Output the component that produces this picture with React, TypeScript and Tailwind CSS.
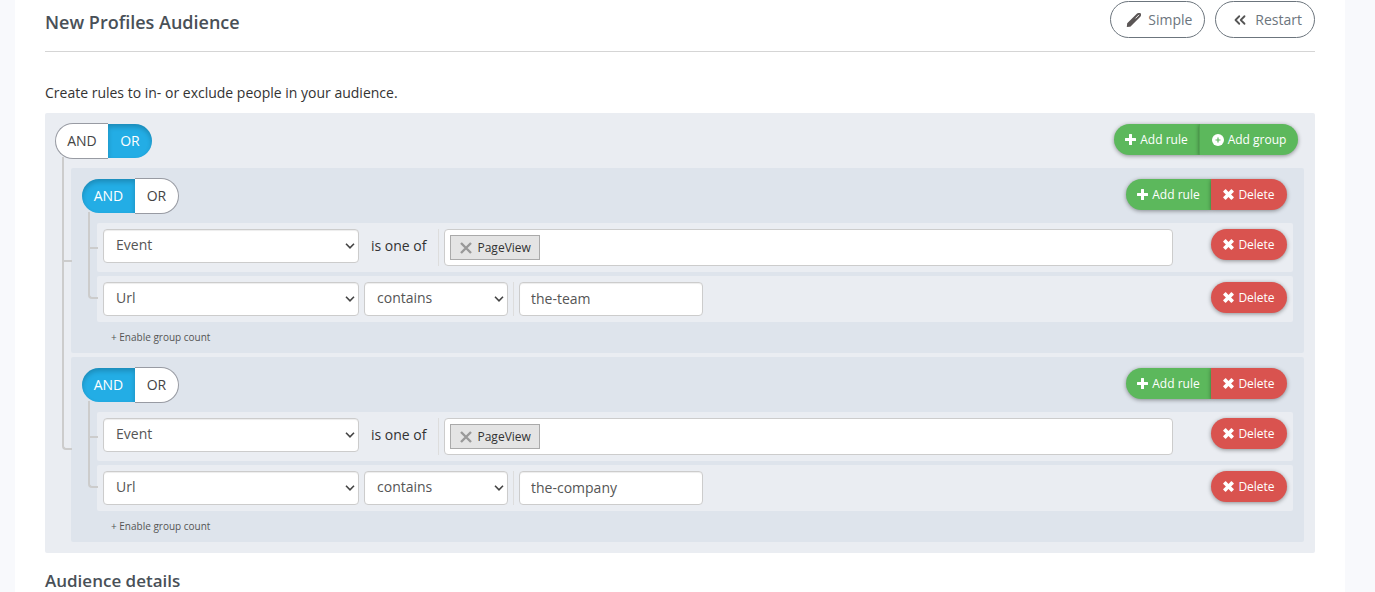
import type { ComponentProps, ReactNode } from "react";
import { ChevronsLeft } from "lucide-react";
import { clsx } from "clsx";

type Condition = "AND" | "OR";

type Rule = {
  field: string;
  operator: string;
  value: string;
  kind: "tags" | "text";
};

type Group = {
  id: string;
  condition: Condition;
  rules: Rule[];
};

const groups: Group[] = [
  {
    id: "group-1",
    condition: "AND",
    rules: [
      { field: "Event", operator: "is one of", value: "PageView", kind: "tags" },
      { field: "Url", operator: "contains", value: "the-team", kind: "text" },
    ],
  },
  {
    id: "group-2",
    condition: "AND",
    rules: [
      { field: "Event", operator: "is one of", value: "PageView", kind: "tags" },
      { field: "Url", operator: "contains", value: "the-company", kind: "text" },
    ],
  },
];

const PlusIcon = () => (
  <svg viewBox="0 0 11 11" className="size-[11px]" fill="currentColor" aria-hidden="true">
    <path d="M4 0.5Q4 0 4.5 0H6.5Q7 0 7 0.5V4H10.5Q11 4 11 4.5V6.5Q11 7 10.5 7H7V10.5Q7 11 6.5 11H4.5Q4 11 4 10.5V7H0.5Q0 7 0 6.5V4.5Q0 4 0.5 4H4Z" />
  </svg>
);

const PlusSignIcon = () => (
  <svg viewBox="0 0 12 12" className="size-3" aria-hidden="true">
    <circle cx="6" cy="6" r="6" fill="currentColor" />
    <path d="M6 3.5V8.5M3.5 6H8.5" stroke="#5cb85c" strokeWidth="1.2" />
  </svg>
);

const RemoveIcon = () => (
  <svg viewBox="0 0 11 11" className="size-[11px]" fill="currentColor" aria-hidden="true">
    <path d="M0.3 2.3L2.3 0.3Q2.6 0 2.9 0.3L5.5 2.9L8.1 0.3Q8.4 0 8.7 0.3L10.7 2.3Q11 2.6 10.7 2.9L8.1 5.5L10.7 8.1Q11 8.4 10.7 8.7L8.7 10.7Q8.4 11 8.1 10.7L5.5 8.1L2.9 10.7Q2.6 11 2.3 10.7L0.3 8.7Q0 8.4 0.3 8.1L2.9 5.5L0.3 2.9Q0 2.6 0.3 2.3Z" />
  </svg>
);

const PencilIcon = () => (
  <svg viewBox="0 0 16 16" className="size-4" aria-hidden="true">
    <path d="M0.8 14.9L1.2 11.2L10.8 1.7Q11.5 1 12.5 1H13.7Q15 1 15 2.2V3.2Q15 4.1 14.3 4.8L4.8 14.3Q4.300 14.8 3.6 14.8Z" fill="#5a5555" />
    <path d="M9.8 6.100L12.8 3.100" stroke="#fff" strokeWidth="0.9" strokeLinecap="round" />
  </svg>
);

const ConditionToggle = ({ name, value }: { name: string; value: Condition }) => {
  return (
    <div className="flex h-9 items-center text-sm" role="radiogroup" aria-label="Condition">
      {(["AND", "OR"] as Condition[]).map((option) => (
        <label
          key={option}
          className={clsx(
            "flex cursor-pointer items-center justify-center",
            option === "AND" ? "w-[53px] rounded-l-full" : "w-11 rounded-r-full",
            option === value
              ? "h-[34px] bg-[#23ade5] text-white shadow-[inset_0_3px_5px_rgba(0,0,0,0.2)]"
              : "h-9 border-y border-[#989ba3] bg-white text-[#444]",
            option === "AND" && option !== value && "border-l",
            option === "OR" && option !== value && "border-r",
          )}
        >
          <input type="radio" name={name} defaultChecked={option === value} className="sr-only" />
          {option}
        </label>
      ))}
    </div>
  );
};

const ActionButton = ({
  icon,
  color,
  className,
  children,
}: {
  icon: ReactNode;
  color: "green" | "red";
  className: string;
  children: ReactNode;
}) => {
  return (
    <button
      type="button"
      className={clsx(
        "flex h-[31px] cursor-pointer items-center justify-center gap-1 text-xs text-white shadow-[0_1px_4px_rgba(0,0,0,0.4)]",
        color === "green" ? "bg-[#5cb85c]" : "bg-[#d9534f]",
        className,
      )}
    >
      {icon}
      {children}
    </button>
  );
};

const DeleteButton = ({ className }: { className: string }) => (
  <ActionButton icon={<RemoveIcon />} color="red" className={clsx("w-[76px]", className)}>
    Delete
  </ActionButton>
);

// Lines that tie a group or a rule to the condition above it
const connector =
  "relative before:absolute before:-left-[9px] before:h-[calc(50%+4px)] before:-top-1 before:w-2.5 before:border-b-2 before:border-l-2 before:border-[#ccc] first:before:-top-[11px] first:before:h-[calc(50%+12px)] last:before:rounded-bl-sm not-last:after:absolute not-last:after:-left-[9px] not-last:after:top-1/2 not-last:after:h-1/2 not-last:after:border-l-2 not-last:after:border-[#ccc]";

const control =
  "h-[34px] rounded border border-[#ccc] bg-white pb-0.5 text-sm text-[#555] shadow-[inset_0_1px_1px_rgba(0,0,0,0.075)]";

const Select = ({ className, children, ...props }: ComponentProps<"select">) => (
  <div className={clsx("relative", className)}>
    <select className={clsx(control, "w-full appearance-none px-3")} {...props}>
      {children}
    </select>
    <svg
      viewBox="0 0 10 10"
      className="pointer-events-none absolute top-3 right-1 size-2.5"
      fill="none"
      stroke="#444"
      strokeWidth="1.6"
      aria-hidden="true"
    >
      <path d="M1 2.8L5 6.8L9 2.8" />
    </svg>
  </div>
);

const RuleRow = ({ rule }: { rule: Rule }) => {
  return (
    <li className={clsx("flex items-start rounded-xs bg-[#eaedf2] p-1.5", connector)}>
      <Select aria-label="Field" defaultValue={rule.field} className="w-64">
        <option>Event</option>
        <option>Url</option>
      </Select>
      {rule.kind === "tags" ? (
        <>
          <span className="flex h-[34px] items-center px-3 text-sm text-[#333]">{rule.operator}</span>
          <div className="mr-[38px] flex grow border-l border-[#ddd] pl-[5px]">
            <div className="flex h-[37px] grow items-center rounded border border-[#ccc] bg-white px-[5px]">
              <span className="flex h-[25px] items-center gap-1 border border-[#aaa] bg-[#e4e4e4] px-2 text-xs text-[#333]">
                <button type="button" aria-label={`Remove ${rule.value}`} className="cursor-pointer p-px">
                  <svg viewBox="0 0 12 12" className="size-3" stroke="#999" strokeWidth="2.4" aria-hidden="true">
                    <path d="M1 1L11 11M11 1L1 11" />
                  </svg>
                </button>
                {rule.value}
              </span>
            </div>
          </div>
        </>
      ) : (
        <>
          <Select aria-label="Operator" defaultValue={rule.operator} className="ml-[5px] w-36">
            <option>contains</option>
            <option>is one of</option>
          </Select>
          <div className="ml-[5px] flex grow border-l border-[#ddd] pl-[5px]">
            <input type="text" aria-label="Value" defaultValue={rule.value} className={clsx(control, "w-[184px] px-[11px]")} />
          </div>
        </>
      )}
      <DeleteButton className="rounded-full" />
    </li>
  );
};

const RuleGroup = ({ group }: { group: Group }) => {
  return (
    <li className={clsx("rounded-xs bg-[#dee4ec] px-[11px] pt-2.5", connector)}>
      <div className="flex items-start justify-between pr-1.5">
        <ConditionToggle name={group.id} value={group.condition} />
        <div className="mt-px flex">
          <ActionButton icon={<PlusIcon />} color="green" className="w-[85px] rounded-l-full">
            Add rule
          </ActionButton>
          <DeleteButton className="rounded-r-full" />
        </div>
      </div>
      <ul className="mt-[9px] ml-[15px] flex flex-col gap-1">
        {group.rules.map((rule) => (
          <RuleRow key={rule.field} rule={rule} />
        ))}
      </ul>
      <button type="button" className="ml-[29px] flex h-[31px] cursor-pointer items-center text-[10px] text-[#555]">
        + Enable group count
      </button>
    </li>
  );
};

const HeaderButton = ({ icon, children }: { icon: ReactNode; children: ReactNode }) => (
  <button
    type="button"
    className="flex h-[37px] cursor-pointer items-center gap-1.5 rounded-full border border-[#6c757d] bg-white pr-3 pl-[15px] text-sm text-[#6c757d]"
  >
    {icon}
    {children}
  </button>
);

export default function App() {
  return (
    <div className="h-screen overflow-hidden bg-[#f8f9fc] pr-[30px] pl-[15px] font-['Open_Sans',sans-serif]">
      <main className="min-h-screen bg-white px-[30px] pt-px">
        <header className="flex items-start justify-between border-b border-[#d5d5d5] pb-[13px]">
          <h1 className="mt-1.5 text-lg leading-[30px] font-semibold text-[#495057]">New Profiles Audience</h1>
          <div className="flex gap-2.5">
            <HeaderButton icon={<PencilIcon />}>Simple</HeaderButton>
            <HeaderButton icon={<ChevronsLeft className="size-4.5 text-[#555]" strokeWidth={2.4} />}>Restart</HeaderButton>
          </div>
        </header>

        <p className="mt-[31px] text-sm leading-5 text-[#333]">Create rules to in- or exclude people in your audience.</p>

        <section className="mt-2.5 rounded-xs bg-[#eaedf2] px-2.5 pt-2.5 pb-[11px]">
          <div className="flex items-start justify-between pr-[7px]">
            <ConditionToggle name="root" value="OR" />
            <div className="mt-px flex">
              <ActionButton icon={<PlusIcon />} color="green" className="w-[85px] rounded-l-full">
                Add rule
              </ActionButton>
              <ActionButton
                icon={<PlusSignIcon />}
                color="green"
                className="w-[99px] rounded-r-full border-l border-[#51a551]"
              >
                Add group
              </ActionButton>
            </div>
          </div>
          <ul className="mt-[9px] mr-px ml-4 flex flex-col gap-1">
            {groups.map((group) => (
              <RuleGroup key={group.id} group={group} />
            ))}
          </ul>
        </section>

        <h2 className="mt-3.5 text-[17px] leading-7 font-semibold text-[#495057]">Audience details</h2>
      </main>
    </div>
  );
}
